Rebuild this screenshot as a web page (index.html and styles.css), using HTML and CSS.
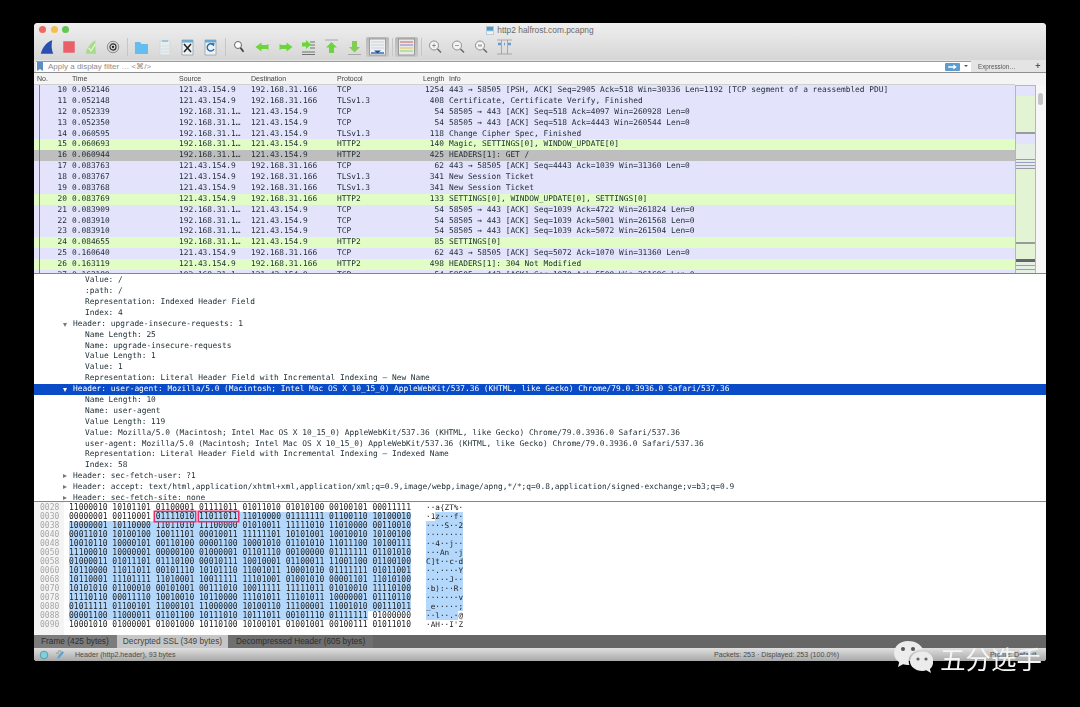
FILE: index.html
```html
<!DOCTYPE html>
<html lang="en">
<head>
<meta charset="utf-8">
<title>http2 halfrost.com.pcapng</title>
<link rel="stylesheet" href="styles.css">
</head>
<body>
<main class="window">
  <header class="chrome">
    <div class="titlebar">
      <div class="lights"><i class="light red"></i><i class="light yellow"></i><i class="light green"></i></div>
      <div class="title">
        <svg class="docicon" viewBox="0 0 9 10"><rect x="0" y="0" width="9" height="10" fill="#b9c9d6"/><rect x="1" y="1" width="7" height="4" fill="#4a9bd0"/><rect x="1" y="6" width="7" height="3" fill="#f2f2f2"/></svg>
        <span>http2 halfrost.com.pcapng</span>
      </div>
    </div>
    <div class="toolbar">
      <span class="tool narrow"><svg viewBox="0 0 23 20"><path d="M5 17C7 10 11 5 17 3c-1 5-1 9 1 14z" fill="#2a4fb0"/></svg></span>
      <span class="tool narrow"><svg viewBox="0 0 23 20"><rect x="5.500" y="4" width="12" height="12" fill="#ea6068"/></svg></span>
      <span class="tool narrow"><svg viewBox="0 0 23 20"><path d="M6 17C7 11 11 6 16 3c0 5 0 9 1 14z" fill="#a8dc88"/><path d="M9 11l2.500 3L16 7" fill="none" stroke="#eaf6e2" stroke-width="1.200"/></svg></span>
      <span class="tool narrow"><svg viewBox="0 0 23 20"><circle cx="11.500" cy="10" r="6" fill="#d8d8d8" stroke="#777" stroke-width=".8"/><circle cx="11.500" cy="10" r="3.200" fill="none" stroke="#333" stroke-width="1.200"/><circle cx="11.500" cy="10" r="1.200" fill="#222"/></svg></span>
      <span class="sep"></span>
      <span class="tool"><svg viewBox="0 0 23 20"><path d="M5 5h5l1.500 2H18v10H5z" fill="#63bdf0"/></svg></span>
      <span class="tool"><svg viewBox="0 0 23 20"><path d="M7 4h10v14H7z" fill="#e6ecef" stroke="#c9d0d4" stroke-width=".6"/><rect x="9" y="3" width="6" height="2" fill="#9cc6dc"/><path d="M8 9h8M8 12h8M8 15h8" stroke="#cfd6da" stroke-width=".6"/></svg></span>
      <span class="tool"><svg viewBox="0 0 23 20"><path d="M6 3h11v15H6z" fill="#eef1f3" stroke="#8b98a3" stroke-width=".7"/><rect x="6" y="3" width="11" height="2.500" fill="#6ea8cc"/><path d="M8 7l7 8M15 7l-7 8" stroke="#222" stroke-width="1.500"/></svg></span>
      <span class="tool"><svg viewBox="0 0 23 20"><path d="M6 3h11v15H6z" fill="#eef1f3" stroke="#8b98a3" stroke-width=".7"/><rect x="6" y="3" width="11" height="2.500" fill="#6ea8cc"/><path d="M14.500 8A3.600 3.600 0 1 0 15 12" fill="none" stroke="#2b6ea8" stroke-width="1.400"/><path d="M12 6.500l3.500-.5-.5 3.500z" fill="#2b6ea8"/></svg></span>
      <span class="sep"></span>
      <span class="tool"><svg viewBox="0 0 23 20"><circle cx="10" cy="8" r="3.500" fill="#fff" stroke="#666" stroke-width="1"/><path d="M12.500 10.800l3 4" stroke="#444" stroke-width="1.800"/></svg></span>
      <span class="tool"><svg viewBox="0 0 23 20"><path d="M4.500 10l6-4.500V8h5l2-1v6l-2-1h-5v2.500z" fill="#6ad63a"/></svg></span>
      <span class="tool"><svg viewBox="0 0 23 20"><path d="M18.500 10l-6-4.500V8h-5l-2-1v6l2-1h5v2.500z" fill="#6ad63a"/></svg></span>
      <span class="tool"><svg viewBox="0 0 23 20"><path d="M5 15h13M5 17.500h13M13 5h5M13 8h5M13 11h5" stroke="#666" stroke-width=".9"/><path d="M14 7.500l-5-4.500v2.500H5v4h4V12z" fill="#6ad63a"/></svg></span>
      <span class="tool"><svg viewBox="0 0 23 20"><path d="M5 3h13" stroke="#a8a8a8" stroke-width="1"/><path d="M11.500 5l5.500 5.500h-3V16h-5v-5.500h-3z" fill="#6ad63a"/></svg></span>
      <span class="tool"><svg viewBox="0 0 23 20"><path d="M5 17.500h13" stroke="#a8a8a8" stroke-width="1"/><path d="M11.500 15.500l5.500-5.500h-3V4h-5v6h-3z" fill="#82cc58"/></svg></span>
      <span class="tool pressed"><svg viewBox="0 0 23 20"><rect x="3.500" y="2" width="16" height="16" fill="#eef0f2" stroke="#8a9096" stroke-width=".8"/><path d="M5 5h13M5 8h13M5 11h13" stroke="#c4c8cc" stroke-width=".8"/><path d="M5 16h13" stroke="#3b6fb0" stroke-width="1.500"/><path d="M11.500 16.500l-3.500-3h7z" fill="#1f4f9c"/></svg></span>
      <span class="sep"></span>
      <span class="tool pressed"><svg viewBox="0 0 23 20"><rect x="3.500" y="2" width="16" height="16" fill="#e9e9e9" stroke="#8a8a8a" stroke-width=".8"/><path d="M5 5h13" stroke="#d05a5a" stroke-width="1"/><path d="M5 8h13" stroke="#7f7fd0" stroke-width="1"/><path d="M5 11h13" stroke="#e0c34a" stroke-width="1"/><path d="M5 14h13" stroke="#8fcf6f" stroke-width="1"/></svg></span>
      <span class="sep"></span>
      <span class="tool"><svg viewBox="0 0 23 20"><circle cx="10" cy="8.500" r="4.500" fill="#f4f4f4" stroke="#777" stroke-width=".8"/><path d="M8 8.500h4M10 6.500v4" stroke="#777" stroke-width=".7"/><path d="M13.500 12l3.500 3.500" stroke="#666" stroke-width="1.400"/></svg></span>
      <span class="tool"><svg viewBox="0 0 23 20"><circle cx="10" cy="8.500" r="4.500" fill="#f4f4f4" stroke="#777" stroke-width=".8"/><path d="M8 8.500h4" stroke="#777" stroke-width=".7"/><path d="M13.500 12l3.500 3.500" stroke="#666" stroke-width="1.400"/></svg></span>
      <span class="tool"><svg viewBox="0 0 23 20"><circle cx="10" cy="8.500" r="4.500" fill="#f4f4f4" stroke="#777" stroke-width=".8"/><rect x="8" y="7.500" width="4" height="2" fill="#aaa"/><path d="M13.500 12l3.500 3.500" stroke="#666" stroke-width="1.400"/></svg></span>
      <span class="tool"><svg viewBox="0 0 23 20"><path d="M4 3h15M4 17h15M8.500 3v14M14.500 3v14" stroke="#9a9a9a" stroke-width=".8"/><path d="M5 7h7M18 7h-7" stroke="#6a9ccc" stroke-width="2.500" stroke-dasharray="3 3"/></svg></span>
    </div>
  </header>

  <div class="filterbar">
    <div class="filterinput">
      <svg class="bookmark" viewBox="0 0 6 9"><path d="M0 0h6v9L3 7 0 9z" fill="#5b8fc4"/></svg>
      <span class="placeholder">Apply a display filter … &lt;⌘/&gt;</span>
      <span class="applybtn"><svg viewBox="0 0 12 7"><path d="M1 2.500h6V.5L11 3.500 7 6.500v-2H1z" fill="#fff"/></svg></span>
      <span class="dropdown"></span>
    </div>
    <span class="expression">Expression…</span>
    <span class="plus">+</span>
  </div>

  <section class="packets">
    <div class="listcol">
      <div class="pkhead">
        <span>No.</span><span>Time</span><span>Source</span><span>Destination</span><span>Protocol</span><span>Length</span><span>Info</span>
      </div>
      <div class="pkbody">
        <div class="pk tcp"><span class="no">10</span><span class="t">0.052146</span><span>121.43.154.9</span><span>192.168.31.166</span><span>TCP</span><span class="len">1254</span><span class="info">443 → 58505 [PSH, ACK] Seq=2905 Ack=518 Win=30336 Len=1192 [TCP segment of a reassembled PDU]</span></div>
        <div class="pk tcp"><span class="no">11</span><span class="t">0.052148</span><span>121.43.154.9</span><span>192.168.31.166</span><span>TLSv1.3</span><span class="len">408</span><span class="info">Certificate, Certificate Verify, Finished</span></div>
        <div class="pk tcp"><span class="no">12</span><span class="t">0.052339</span><span>192.168.31.1…</span><span>121.43.154.9</span><span>TCP</span><span class="len">54</span><span class="info">58505 → 443 [ACK] Seq=518 Ack=4097 Win=260928 Len=0</span></div>
        <div class="pk tcp"><span class="no">13</span><span class="t">0.052350</span><span>192.168.31.1…</span><span>121.43.154.9</span><span>TCP</span><span class="len">54</span><span class="info">58505 → 443 [ACK] Seq=518 Ack=4443 Win=260544 Len=0</span></div>
        <div class="pk tcp"><span class="no">14</span><span class="t">0.060595</span><span>192.168.31.1…</span><span>121.43.154.9</span><span>TLSv1.3</span><span class="len">118</span><span class="info">Change Cipher Spec, Finished</span></div>
        <div class="pk http"><span class="no">15</span><span class="t">0.060693</span><span>192.168.31.1…</span><span>121.43.154.9</span><span>HTTP2</span><span class="len">140</span><span class="info">Magic, SETTINGS[0], WINDOW_UPDATE[0]</span></div>
        <div class="pk sel"><span class="no">16</span><span class="t">0.060944</span><span>192.168.31.1…</span><span>121.43.154.9</span><span>HTTP2</span><span class="len">425</span><span class="info">HEADERS[1]: GET /</span></div>
        <div class="pk tcp"><span class="no">17</span><span class="t">0.083763</span><span>121.43.154.9</span><span>192.168.31.166</span><span>TCP</span><span class="len">62</span><span class="info">443 → 58505 [ACK] Seq=4443 Ack=1039 Win=31360 Len=0</span></div>
        <div class="pk tcp"><span class="no">18</span><span class="t">0.083767</span><span>121.43.154.9</span><span>192.168.31.166</span><span>TLSv1.3</span><span class="len">341</span><span class="info">New Session Ticket</span></div>
        <div class="pk tcp"><span class="no">19</span><span class="t">0.083768</span><span>121.43.154.9</span><span>192.168.31.166</span><span>TLSv1.3</span><span class="len">341</span><span class="info">New Session Ticket</span></div>
        <div class="pk http"><span class="no">20</span><span class="t">0.083769</span><span>121.43.154.9</span><span>192.168.31.166</span><span>HTTP2</span><span class="len">133</span><span class="info">SETTINGS[0], WINDOW_UPDATE[0], SETTINGS[0]</span></div>
        <div class="pk tcp"><span class="no">21</span><span class="t">0.083909</span><span>192.168.31.1…</span><span>121.43.154.9</span><span>TCP</span><span class="len">54</span><span class="info">58505 → 443 [ACK] Seq=1039 Ack=4722 Win=261824 Len=0</span></div>
        <div class="pk tcp"><span class="no">22</span><span class="t">0.083910</span><span>192.168.31.1…</span><span>121.43.154.9</span><span>TCP</span><span class="len">54</span><span class="info">58505 → 443 [ACK] Seq=1039 Ack=5001 Win=261568 Len=0</span></div>
        <div class="pk tcp"><span class="no">23</span><span class="t">0.083910</span><span>192.168.31.1…</span><span>121.43.154.9</span><span>TCP</span><span class="len">54</span><span class="info">58505 → 443 [ACK] Seq=1039 Ack=5072 Win=261504 Len=0</span></div>
        <div class="pk http"><span class="no">24</span><span class="t">0.084655</span><span>192.168.31.1…</span><span>121.43.154.9</span><span>HTTP2</span><span class="len">85</span><span class="info">SETTINGS[0]</span></div>
        <div class="pk tcp"><span class="no">25</span><span class="t">0.160640</span><span>121.43.154.9</span><span>192.168.31.166</span><span>TCP</span><span class="len">62</span><span class="info">443 → 58505 [ACK] Seq=5072 Ack=1070 Win=31360 Len=0</span></div>
        <div class="pk http"><span class="no">26</span><span class="t">0.163119</span><span>121.43.154.9</span><span>192.168.31.166</span><span>HTTP2</span><span class="len">498</span><span class="info">HEADERS[1]: 304 Not Modified</span></div>
        <div class="pk tcp"><span class="no">27</span><span class="t">0.163189</span><span>192.168.31.1…</span><span>121.43.154.9</span><span>TCP</span><span class="len">54</span><span class="info">58505 → 443 [ACK] Seq=1070 Ack=5500 Win=261696 Len=0</span></div>
      </div>
    </div>
    <div class="minimap">
      <i class="m-p" style="flex:10"></i><i class="m-g" style="flex:36"></i><i class="m-d" style="flex:2"></i><i class="m-p" style="flex:10"></i><i class="m-g2" style="flex:15"></i><i class="m-d" style="flex:1"></i><i class="m-g2" style="flex:2"></i><i class="m-s" style="flex:1"></i><i class="m-g2" style="flex:2"></i><i class="m-s" style="flex:1"></i><i class="m-p" style="flex:2"></i><i class="m-d" style="flex:1"></i><i class="m-g" style="flex:73"></i><i class="m-d" style="flex:2"></i><i class="m-g" style="flex:15"></i><i class="m-dk" style="flex:3"></i><i class="m-g2" style="flex:3"></i><i class="m-s" style="flex:1"></i><i class="m-g2" style="flex:3"></i><i class="m-s" style="flex:1"></i><i class="m-g2" style="flex:3"></i>
    </div>
    <div class="scrolltrack"><i class="thumb"></i></div>
  </section>

  <section class="details">
    <div class="dl l2">Value: /</div>
    <div class="dl l2">:path: /</div>
    <div class="dl l2">Representation: Indexed Header Field</div>
    <div class="dl l2">Index: 4</div>
    <div class="dl l1 open">Header: upgrade-insecure-requests: 1</div>
    <div class="dl l2">Name Length: 25</div>
    <div class="dl l2">Name: upgrade-insecure-requests</div>
    <div class="dl l2">Value Length: 1</div>
    <div class="dl l2">Value: 1</div>
    <div class="dl l2">Representation: Literal Header Field with Incremental Indexing – New Name</div>
    <div class="dl l1 open picked">Header: user-agent: Mozilla/5.0 (Macintosh; Intel Mac OS X 10_15_0) AppleWebKit/537.36 (KHTML, like Gecko) Chrome/79.0.3936.0 Safari/537.36</div>
    <div class="dl l2">Name Length: 10</div>
    <div class="dl l2">Name: user-agent</div>
    <div class="dl l2">Value Length: 119</div>
    <div class="dl l2">Value: Mozilla/5.0 (Macintosh; Intel Mac OS X 10_15_0) AppleWebKit/537.36 (KHTML, like Gecko) Chrome/79.0.3936.0 Safari/537.36</div>
    <div class="dl l2">user-agent: Mozilla/5.0 (Macintosh; Intel Mac OS X 10_15_0) AppleWebKit/537.36 (KHTML, like Gecko) Chrome/79.0.3936.0 Safari/537.36</div>
    <div class="dl l2">Representation: Literal Header Field with Incremental Indexing – Indexed Name</div>
    <div class="dl l2">Index: 58</div>
    <div class="dl l1 shut">Header: sec-fetch-user: ?1</div>
    <div class="dl l1 shut">Header: accept: text/html,application/xhtml+xml,application/xml;q=0.9,image/webp,image/apng,*/*;q=0.8,application/signed-exchange;v=b3;q=0.9</div>
    <div class="dl l1 shut">Header: sec-fetch-site: none</div>
  </section>

  <section class="hex">
    <div class="hx"><span class="off">0028</span><span class="bytes">11000010 10101101 01100001 01111011 01011010 01010100 00100101 00011111</span><span class="asc">··a{ZT%·</span></div>
    <div class="hx"><span class="off">0030</span><span class="bytes">00000001 00110001 <b class="box">01111010</b> <b class="box">11011011</b><mark> 11010000 01111111 01100110 10100010</mark></span><span class="asc">·1<mark>z···f·</mark></span></div>
    <div class="hx"><span class="off">0038</span><span class="bytes"><mark>10000001 10110000 11011010 11100000 01010011 11111010 11010000 00110010</mark></span><span class="asc"><mark>····S··2</mark></span></div>
    <div class="hx"><span class="off">0040</span><span class="bytes"><mark>00011010 10100100 10011101 00010011 11111101 10101001 10010010 10100100</mark></span><span class="asc"><mark>········</mark></span></div>
    <div class="hx"><span class="off">0048</span><span class="bytes"><mark>10010110 10000101 00110100 00001100 10001010 01101010 11011100 10100111</mark></span><span class="asc"><mark>··4··j··</mark></span></div>
    <div class="hx"><span class="off">0050</span><span class="bytes"><mark>11100010 10000001 00000100 01000001 01101110 00100000 01111111 01101010</mark></span><span class="asc"><mark>···An ·j</mark></span></div>
    <div class="hx"><span class="off">0058</span><span class="bytes"><mark>01000011 01011101 01110100 00010111 10010001 01100011 11001100 01100100</mark></span><span class="asc"><mark>C]t··c·d</mark></span></div>
    <div class="hx"><span class="off">0060</span><span class="bytes"><mark>10110000 11011011 00101110 10101110 11001011 10001010 01111111 01011001</mark></span><span class="asc"><mark>··.····Y</mark></span></div>
    <div class="hx"><span class="off">0068</span><span class="bytes"><mark>10110001 11101111 11010001 10011111 11101001 01001010 00001101 11010100</mark></span><span class="asc"><mark>·····J··</mark></span></div>
    <div class="hx"><span class="off">0070</span><span class="bytes"><mark>10101010 01100010 00101001 00111010 10011111 11111011 01010010 11110100</mark></span><span class="asc"><mark>·b):··R·</mark></span></div>
    <div class="hx"><span class="off">0078</span><span class="bytes"><mark>11110110 00011110 10010010 10110000 11101011 11101011 10000001 01110110</mark></span><span class="asc"><mark>·······v</mark></span></div>
    <div class="hx"><span class="off">0080</span><span class="bytes"><mark>01011111 01100101 11000101 11000000 10100110 11100001 11001010 00111011</mark></span><span class="asc"><mark>_e·····;</mark></span></div>
    <div class="hx"><span class="off">0088</span><span class="bytes"><mark>00001100 11000011 01101100 10111010 10111011 00101110 01111111</mark> 01000000</span><span class="asc"><mark>··l··.·</mark>@</span></div>
    <div class="hx"><span class="off">0090</span><span class="bytes">10001010 01000001 01001000 10110100 10100101 01001001 00100111 01011010</span><span class="asc">·AH··I'Z</span></div>
  </section>

  <nav class="tabs">
    <span class="tab">Frame (425 bytes)</span>
    <span class="tab active">Decrypted SSL (349 bytes)</span>
    <span class="tab">Decompressed Header (605 bytes)</span>
  </nav>

  <footer class="status">
    <svg class="st-icon" viewBox="0 0 30 12"><circle cx="7" cy="6" r="3.800" fill="#7fd0dc" stroke="#4d8f9c" stroke-width=".8"/><path d="M20 10l1-3 4-5 2 1.500-4 5z" fill="#5aa6d6"/><path d="M21 2h3M19 4h3" stroke="#777" stroke-width=".7"/></svg>
    <span class="st-text">Header (http2.header), 93 bytes</span>
    <span class="st-packets">Packets: 253 · Displayed: 253 (100.0%)</span>
    <span class="st-profile">Profile: Default</span>
  </footer>
</main>

<aside class="watermark">
  <svg class="wechat" viewBox="0 0 40 35"><path d="M15 1C7 1 1 6.500 1 13c0 3.800 2 7 5.200 9.200L5 27l5-2.700c1.600.5 3.200.7 5 .7 .5 0 1 0 1.400-.1C15.900 23.600 15.700 22.300 15.700 21c0-6.600 6-11.700 13.600-11.700h.6C28 4.500 22 1 15 1z" fill="#ececec"/><path d="M29.300 11.500C22.500 11.500 17 15.800 17 21.200s5.500 9.700 12.300 9.700c1.400 0 2.800-.2 4-.6L38 33l-1.100-4c2-1.800 3.300-4.500 3.300-7.800 0-5.400-4.100-9.700-10.900-9.700z" fill="#ececec"/><circle cx="10" cy="9" r="2" fill="#555"/><circle cx="20" cy="9" r="2" fill="#555"/><circle cx="25" cy="19" r="1.600" fill="#666"/><circle cx="33" cy="19" r="1.600" fill="#666"/></svg>
  <span class="wm-text">五分选手</span>
</aside>
</body>
</html>
```

FILE: styles.css
```css
* { box-sizing: border-box; }
html, body { margin: 0; height: 707px; overflow: hidden; background: #000; }
body { padding: 23px 34px 46px; position: relative; }

.window {
  height: 638px;
  display: flex;
  flex-direction: column;
  border-radius: 4px 4px 3px 3px;
  overflow: hidden;
  background: #fff;
  filter: blur(.35px);
  font-family: "DejaVu Sans Mono", "Liberation Mono", monospace;
  font-size: 7.85px;
  color: #1c2b33;
}

/* title + toolbar */
.chrome { height: 37px; flex: none; background: linear-gradient(#efefef, #d6d6d6); }
.titlebar { height: 14px; position: relative; display: flex; align-items: center; justify-content: center; }
.lights { position: absolute; left: 5px; top: 3px; display: flex; gap: 4.500px; }
.light { width: 7px; height: 7px; border-radius: 50%; }
.red { background: #ed6a5f; }
.yellow { background: #f5bf4f; }
.green { background: #62c554; }
.title { display: flex; align-items: center; gap: 3px; font: 8.400px "Liberation Sans", Arial, sans-serif; color: #6a6a6a; }
.docicon { width: 8px; height: 9px; }
.toolbar { height: 23px; padding-left: 2px; display: flex; align-items: flex-start; }
.tool { width: 23px; height: 20px; flex: none; display: block; }
.tool.narrow { width: 22px; }
.tool svg { width: 100%; height: 20px; display: block; }
.tool.pressed { background: linear-gradient(#b9b9b9, #c8c8c8); border-radius: 2px; }
.sep { width: 6px; height: 20px; flex: none; position: relative; }
.sep::after { content: ""; position: absolute; left: 2.500px; top: 1px; bottom: 1px; width: 1px; background: #c6c6c6; }

/* filter */
.filterbar { height: 13px; flex: none; display: flex; align-items: center; background: #e4e4e4; border-bottom: 1px solid #8f8f8f; padding-left: 2px; }
.filterinput { width: 935px; height: 11px; background: #fff; display: flex; align-items: center; border-top: 1px solid #9d9d9d; }
.bookmark { width: 6px; height: 9px; margin-left: 1px; }
.placeholder { margin-left: 5px; flex: 1; font: 8px "Liberation Sans", Arial, sans-serif; color: #8d8d8d; }
.applybtn { width: 15px; height: 8px; background: #5c9ccf; border-radius: 1px; display: flex; align-items: center; justify-content: center; }
.applybtn svg { width: 11px; height: 6px; }
.dropdown { width: 11px; height: 100%; position: relative; }
.dropdown::after { content: ""; position: absolute; left: 3.500px; top: 3.500px; border: 2px solid transparent; border-top: 2.500px solid #555; }
.expression { margin-left: 7px; width: 53px; font: 6.300px "Liberation Sans", Arial, sans-serif; color: #555; }
.plus { width: 14px; font: bold 9px "Liberation Sans", Arial, sans-serif; color: #555; text-align: center; }

/* packet list */
.packets { height: 201px; flex: none; display: flex; background: #f4f4f4; border-bottom: 1px solid #5b8bdc; }
.listcol { flex: 1; min-width: 0; display: flex; flex-direction: column; }
.pkhead, .pk { display: grid; grid-template-columns: 33px 112px 72px 86px 84px 23px 1fr; white-space: nowrap; }
.pkhead { height: 12px; flex: none; align-items: center; background: #f4f4f4; border-bottom: 1px solid #d0d0d0; font: 7px "Liberation Sans", Arial, sans-serif; color: #444; }
.pkhead span:first-child { padding-left: 3px; }
.pkhead span:nth-child(2) { padding-left: 5px; }
.pkhead span:nth-child(6) { padding-left: 2px; }
.pkhead span:nth-child(7) { padding-left: 5px; }
.pkbody { flex: 1; overflow: hidden; }
.pk { height: 10.880px; line-height: 10.880px; overflow: hidden; }
.tcp { background: #e4e3fc; }
.http { background: #e1fcc5; }
.sel { background: #bebebe; }
.no { text-align: right; position: relative; }
.no::before { content: ""; position: absolute; left: 5px; top: 0; bottom: 0; width: 1px; background: #7f8090; }
.t { padding-left: 5px; }
.len { text-align: right; }
.info { padding-left: 5px; }
.minimap { width: 21px; flex: none; margin-top: 12px; display: flex; flex-direction: column; border: 1px solid #b4b4c4; border-bottom: 0; }
.minimap i { display: block; min-height: 0; }
.m-p { background: #e4e3fc; }
.m-g { background: #e3f4d4; }
.m-g2 { background: #e6efe4; }
.m-d { background: #9a9a9f; }
.m-dk { background: #66666a; }
.m-s { background: #9a9ac4; }
.scrolltrack { width: 10px; flex: none; margin-top: 12px; background: #f7f7f7; padding: 8px 2px 0; }
.thumb { display: block; width: 5px; height: 12px; background: #c4c4c4; border-radius: 2.500px; }

/* details */
.details { height: 228px; flex: none; overflow: hidden; border-bottom: 1px solid #5b8bdc; padding-top: 1.200px; }
.dl { height: 10.900px; line-height: 10.900px; white-space: nowrap; position: relative; }
.l1 { padding-left: 39px; }
.l2 { padding-left: 51px; }
.open::before, .shut::before { content: ""; position: absolute; }
.open::before { left: 29px; top: 4px; border: 2.500px solid transparent; border-top: 4px solid #777; border-bottom: 0; }
.shut::before { left: 29px; top: 3px; border: 2.500px solid transparent; border-left: 4px solid #777; border-right: 0; }
.picked { background: #0a4bc8; color: #fff; }
.picked::before { border-top-color: #fff; }

/* hex */
.hex { height: 133px; flex: none; padding-top: 1px; background: linear-gradient(90deg, #f4f4f4 30px, #fff 30px); overflow: hidden; font-size: 8px; }
.hx { height: 9.040px; line-height: 9.040px; display: flex; white-space: pre; }
.off { width: 35px; padding-left: 6px; color: #a6a6a6; flex: none; }
.bytes { width: 357px; flex: none; color: #222; }
.asc { color: #222; font-size: 7.700px; }
mark { background: #b3d8fc; color: inherit; }
.box { position: relative; z-index: 1; font-weight: normal; padding: 0 .5px; margin: 0 -.5px; background: #b3d8fc; box-shadow: 0 0 0 1.500px #e8306f; }

/* tabs + status */
.tabs { height: 13px; flex: none; display: flex; background: #666; font: 8.300px/13px "Liberation Sans", Arial, sans-serif; color: #2e2e2e; }
.tab { padding: 0 8px 0 7px; background: #7c7c7c; }
.tab:nth-child(3) { background: #6f6f6f; padding: 0 8px; }
.tab.active { background: #c6c6c6; padding: 0 6px; color: #444; }
.status { flex: 1; min-height: 0; display: flex; align-items: center; background: linear-gradient(#e0e0e0, #a8a8a8); font: 7.100px "Liberation Sans", Arial, sans-serif; color: #4b4b4b; }
.st-icon { width: 30px; height: 12px; margin-left: 3px; flex: none; }
.st-text { margin-left: 8px; width: 639px; flex: none; }
.st-packets { width: 276px; flex: none; }
.st-profile { white-space: nowrap; }

/* watermark over the window */
.watermark { position: absolute; left: 893px; top: 639px; display: flex; align-items: center; gap: 7px; }
.wechat { width: 40px; height: 35px; flex: none; }
.wm-text { font: 400 25.500px "Noto Sans CJK SC", sans-serif; color: #f4f4f4; white-space: nowrap; }
```
